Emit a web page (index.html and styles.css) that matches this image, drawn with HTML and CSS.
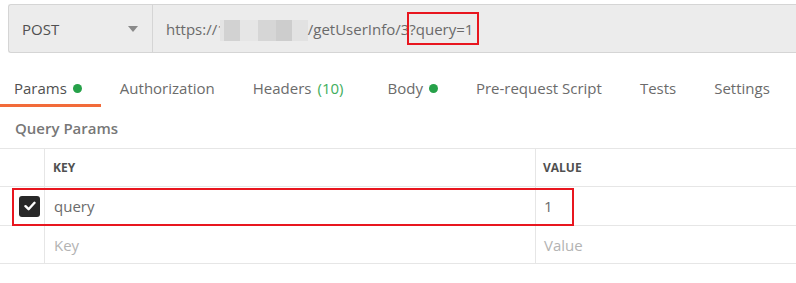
FILE: index.html
```html
<!DOCTYPE html>
<html lang="en">
<head>
  <meta charset="UTF-8" />
  <title>Request</title>
  <link rel="stylesheet" href="styles.css">
</head>
<body>
  <div class="url-bar">
    <div class="method">
      <span>POST</span>
      <span class="caret"></span>
    </div>
    <div class="url">
      <span>https://1</span><span class="blur"></span><span>/getUserInfo/3</span><span class="mark">?query=1</span>
    </div>
  </div>

  <div class="tabs">
    <div class="tab active">Params <span class="dot"></span></div>
    <div class="tab">Authorization</div>
    <div class="tab headers">Headers <span class="count">(10)</span></div>
    <div class="tab">Body <span class="dot"></span></div>
    <div class="tab">Pre-request Script</div>
    <div class="tab">Tests</div>
    <div class="tab">Settings</div>
  </div>

  <div class="section-title">Query Params</div>

  <div class="params">
    <div class="row head">
      <div class="cell check"></div>
      <div class="cell key">KEY</div>
      <div class="cell value">VALUE</div>
    </div>
    <div class="row">
      <div class="cell check">
        <span class="box">
          <svg width="12" height="10" viewBox="0 0 12 10"><path d="M1.5 5.2 L4.6 8.2 L10.5 1.8" fill="none" stroke="#fff" stroke-width="2.4" stroke-linecap="round" stroke-linejoin="round"/></svg>
        </span>
      </div>
      <div class="cell key">query</div>
      <div class="cell value">1</div>
      <div class="row-mark"></div>
    </div>
    <div class="row">
      <div class="cell check"></div>
      <div class="cell key placeholder">Key</div>
      <div class="cell value placeholder">Value</div>
    </div>
  </div>
</body>
</html>
```

FILE: styles.css
```css
body {
  margin: 0;
  font-family: "Open Sans", "Liberation Sans", sans-serif;
  color: #505050;
  background: #fff;
}

.url-bar {
  display: flex;
  margin: 4px 0 0 8px;
  height: 47px;
  background: #ececec;
  border: 1px solid #d5d5d5;
  border-right: none;
  border-radius: 3px 0 0 3px;
  font-size: 15px;
}

.method {
  width: 116px;
  padding: 0 14px 0 13px;
  display: flex;
  align-items: center;
  justify-content: space-between;
  border-right: 1px solid #d5d5d5;
  color: #505050;
}

.caret {
  width: 0;
  height: 0;
  border-left: 5px solid transparent;
  border-right: 5px solid transparent;
  border-top: 6px solid #8a8a8a;
  margin-top: 1px;
}

.url {
  display: flex;
  align-items: center;
  padding-left: 13px;
  color: #6a6a6a;
  white-space: pre;
}

/* masked host name */
.blur {
  display: inline-block;
  width: 88px;
  height: 21px;
  margin: 3px 0 0 -6px;
  background:
    linear-gradient(to right,
      #e4e4e4 0, #e4e4e4 4px,
      #d2d2d2 4px, #d2d2d2 20px,
      #e6e6e6 20px, #e6e6e6 38px,
      #d6d6d6 38px, #d6d6d6 56px,
      #cdcdcd 56px, #cdcdcd 72px,
      #e2e2e2 72px, #e2e2e2 88px);
}

.mark {
  position: relative;
}

.mark::after {
  content: "";
  position: absolute;
  left: -2px;
  right: -6px;
  top: -7px;
  bottom: -6px;
  border: 2px solid #e8161f;
}

.tabs {
  display: flex;
  font-size: 15px;
  color: #6b6b6b;
}

.tab {
  padding: 25px 19px 6px;
  line-height: 20px;
  border-bottom: 3px solid transparent;
  display: flex;
  align-items: center;
  gap: 6px;
  white-space: nowrap;
}

.tab:first-child {
  padding-left: 14px;
}

.tab.headers {
  padding-right: 25px;
}

.tab.active {
  color: #505050;
  border-bottom-color: #f26b3a;
}

.dot {
  width: 9px;
  height: 9px;
  border-radius: 50%;
  background: #26a149;
}

.count {
  color: #3fae5c;
}

.section-title {
  padding: 12px 15px 11px;
  line-height: 18px;
  font-size: 15px;
  font-weight: 600;
  color: #777;
}

.params {
  border-top: 1px solid #e6e6e6;
}

.row {
  position: relative;
  display: flex;
  height: 37px;
  border-bottom: 1px solid #e6e6e6;
}

.row:nth-child(2) {
  height: 38px;
}

.cell {
  display: flex;
  align-items: center;
  font-size: 15px;
  color: #6b6b6b;
}

.check {
  width: 45px;
  border-right: 1px solid #e6e6e6;
  padding-left: 19px;
  box-sizing: border-box;
}

.key {
  width: 491px;
  padding-left: 9px;
  border-right: 1px solid #e6e6e6;
  box-sizing: border-box;
}

.value {
  flex: 1;
  padding-left: 8px;
}

.head .cell {
  font-size: 12px;
  font-weight: 700;
  color: #505050;
}

.head .key {
  padding-left: 8px;
}

.head .value {
  padding-left: 7px;
}

.placeholder {
  color: #b3b3b3;
}

.box {
  width: 21px;
  height: 21px;
  border-radius: 3px;
  background: #282828;
  display: flex;
  align-items: center;
  justify-content: center;
}

.row-mark {
  position: absolute;
  left: 12px;
  top: 1px;
  width: 562px;
  height: 38px;
  box-sizing: border-box;
  border: 2px solid #e8161f;
}
```
